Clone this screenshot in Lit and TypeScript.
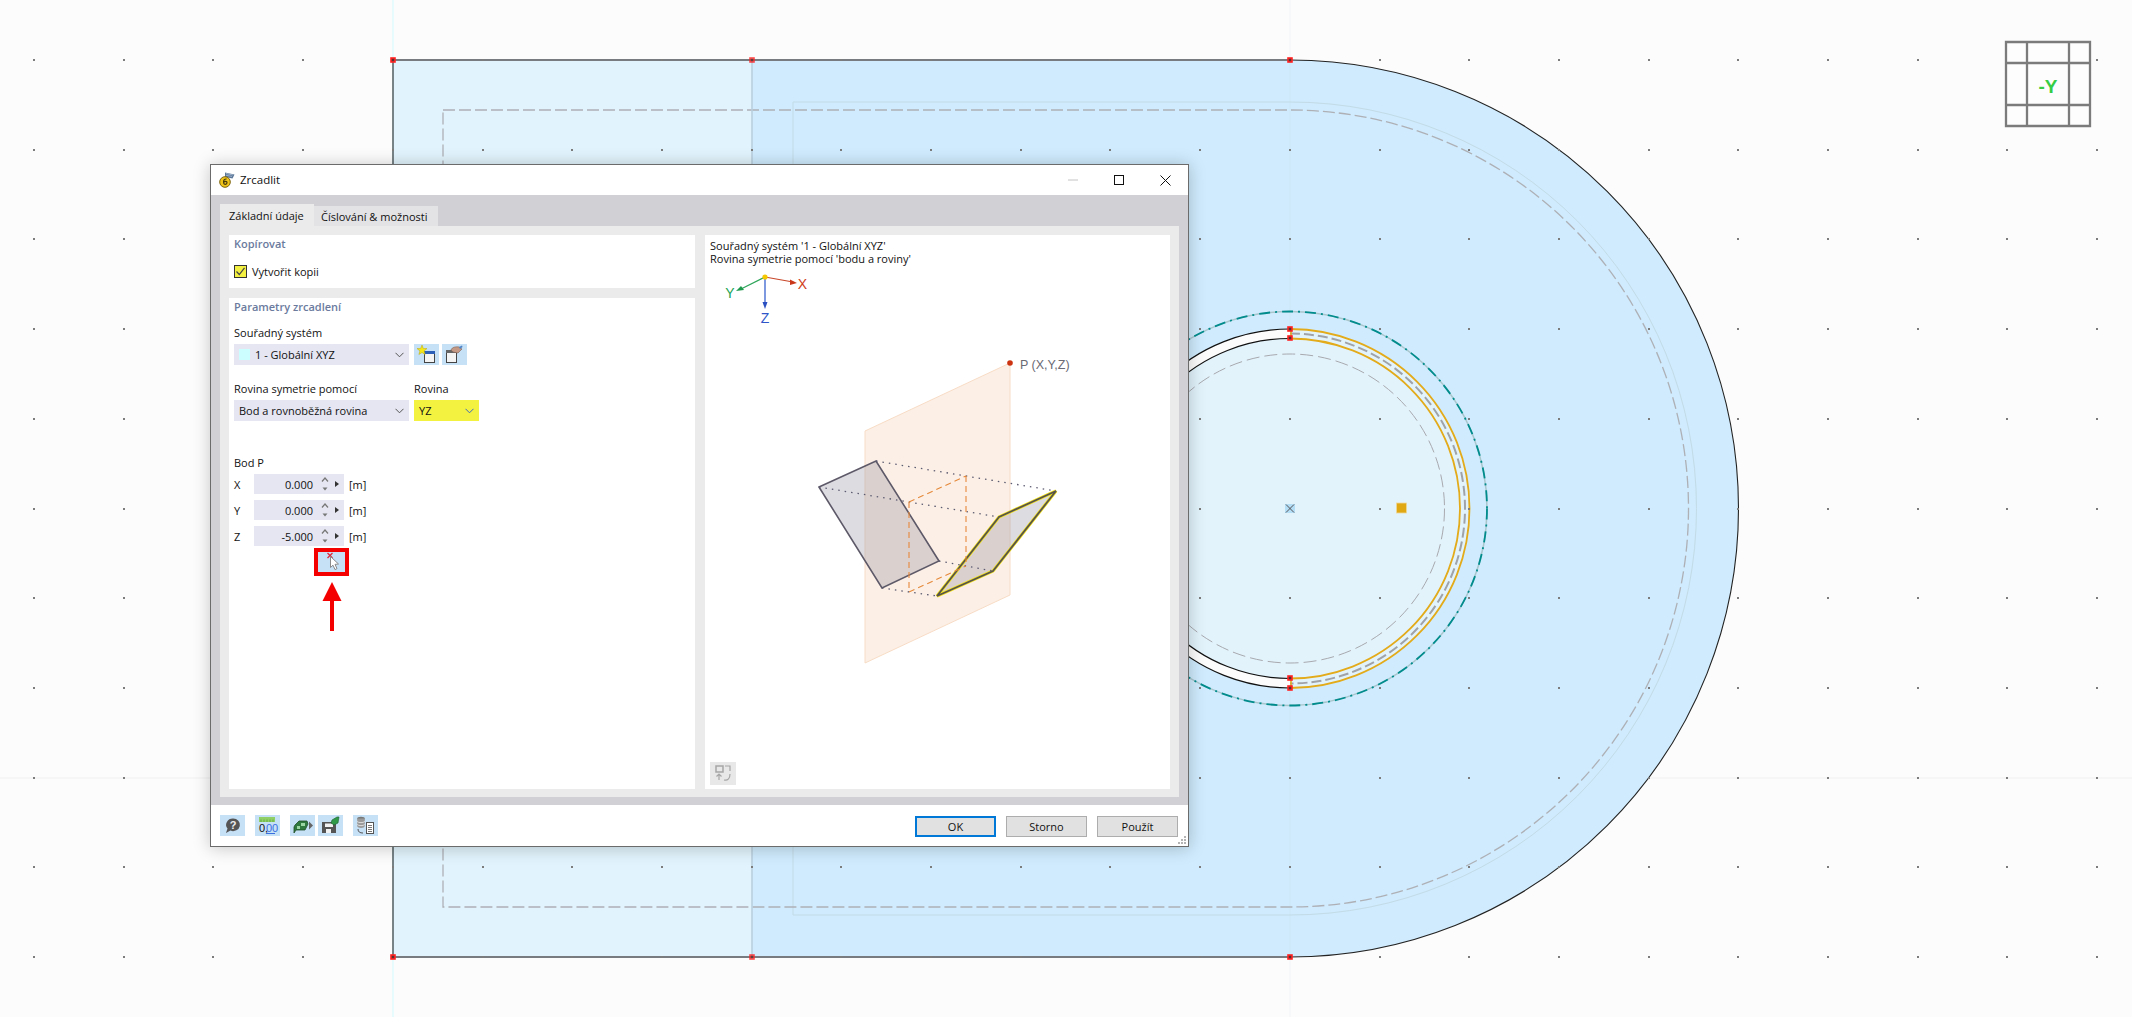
import { LitElement, html, css, svg } from "lit";
import { customElement } from "lit/decorators.js";

const CX = 1290;
const CY = 508.5;
const STEP = 89.7;

function dots() {
  const out = [];
  for (let m = 0; m <= 10; m++) {
    for (let n = 0; n <= 23; n++) {
      const x = Math.round(34 + n * STEP);
      const y = Math.round(60 + m * STEP);
      out.push(svg`<rect x=${x - 1} y=${y - 1} width="2" height="2" fill="#7c7c7c"></rect>`);
    }
  }
  return out;
}

function node(x: number, y: number, o = 1) {
  return svg`<rect x=${x - 2} y=${y - 2} width="4" height="4" fill="#553333" stroke="#ff2222" stroke-width="1.6" opacity=${o}></rect>`;
}

const chevron = (c = "#555") => html`<svg class="chev" width="9" height="6" viewBox="0 0 9 6"><path d="M.5 .8 4.5 4.8 8.5 .8" fill="none" stroke=${c} stroke-width="1"></path></svg>`;

const icons = {
  app: html`<svg width="16" height="16" viewBox="0 0 16 16"><path d="M6 .5 15.5 2.5 13.5 6.5 6 5Z" fill="#5b7797"></path><path d="M7 1.5 14 3M7 3.2 13 4.5" stroke="#a9bdd4" stroke-width=".8"></path><circle cx="6" cy="10" r="5.3" fill="#f0c419" stroke="#7d6410" stroke-width="1"></circle><path d="M7.6 7C5.4 6.8 4.2 8.4 4.6 10.8 5 13 8 12.8 8 10.6 8 9 5.8 9 5 10.2" fill="none" stroke="#4a3d0c" stroke-width="1.2"></path></svg>`,
  add: html`<svg width="25" height="21" viewBox="0 0 25 21"><rect x="10.5" y="7.5" width="10" height="11" fill="#f4f4f4" stroke="#444"></rect><rect x="10" y="7" width="11" height="3" fill="#2c5fb8"></rect><path d="M8 1 9.3 4.4 13 4.6 10.1 6.9 11.1 10.5 8 8.5 4.9 10.5 5.9 6.9 3 4.6 6.7 4.4Z" fill="#f5e616" stroke="#b9a60a" stroke-width=".5"></path></svg>`,
  edit: html`<svg width="25" height="21" viewBox="0 0 25 21"><rect x="4.5" y="7.5" width="10" height="11" fill="#f4f4f4" stroke="#444"></rect><rect x="4" y="6" width="11" height="3" fill="#666"></rect><path d="M9 6C10 3 14 2.5 17 3L20 5 16 9 11 8Z" fill="#c49a86" stroke="#7e5f52" stroke-width=".6"></path><path d="M17 3 20 1.5 20.5 3 18 5Z" fill="#4e82c4"></path></svg>`,
  pick: html`<svg width="27" height="20" viewBox="0 0 27 20"><path d="M9.5 1 14.5 6M14.5 1 9.5 6" stroke="#dd2a3a" stroke-width="1.3"></path><path d="M12.5 4.5 12.5 15.5 15 13.2 17 17.6 19 16.6 17 12.4 20.5 12Z" fill="#fff" stroke="#8a8a8a" stroke-width="1"></path></svg>`,
  help: html`<svg width="25" height="21" viewBox="0 0 25 21"><path d="M13 3.5A6.8 6.3 0 1 1 10.5 15.6L6 18 7.5 13.6A6.8 6.3 0 0 1 13 3.5Z" fill="#555"></path><text x="13" y="13.8" text-anchor="middle" class="iq">?</text></svg>`,
  units: html`<svg width="25" height="21" viewBox="0 0 25 21"><rect x="4" y="2" width="16" height="5" fill="#8fcf66"></rect><path d="M6 4.5V7M9 4.5V7M12 4.5V7M15 4.5V7M18 4.5V7" stroke="#4f9c34" stroke-width=".7"></path><text x="4" y="17" class="in">0,</text><text x="11" y="17" class="in blue">00</text><path d="M11 18.5H20" stroke="#3a6fe0" stroke-width="1"></path></svg>`,
  model: html`<svg width="25" height="21" viewBox="0 0 25 21"><path d="M5 10 9 6H17L18 9 15 15H6L4 18V12Z" fill="#2f7a3e" stroke="#1f4f2a" stroke-width=".8"></path><path d="M7 11H10V14H7ZM11 8H15V11H11Z" fill="#9ad5a4"></path><path d="M19 6.5 23 10.5 19 14.5Z" fill="#666"></path></svg>`,
  save: html`<svg width="25" height="21" viewBox="0 0 25 21"><path d="M4 7H18V18H4Z" fill="#555"></path><rect x="7" y="8.5" width="8" height="3.5" fill="#f2f2f2"></rect><rect x="8" y="14" width="5" height="4" fill="#f2f2f2"></rect><path d="M14 5 19 2 21 2 20 8 16 10 13 8Z" fill="#2f9a48" stroke="#1f5f30" stroke-width=".6"></path></svg>`,
  copy: html`<svg width="25" height="21" viewBox="0 0 25 21"><ellipse cx="8" cy="3.5" rx="3.8" ry="1.8" fill="#777"></ellipse><path d="M4.2 3.5V11C4.2 13.5 11.8 13.5 11.8 11V3.5" fill="#9a9a9a"></path><path d="M4.2 6.5C5.5 8 10.5 8 11.8 6.5M4.2 9.5C5.5 11 10.5 11 11.8 9.5" fill="none" stroke="#eee" stroke-width=".8"></path><path d="M5 14C5 17 7 18 10 18" fill="none" stroke="#555"></path><rect x="13.5" y="7.5" width="7" height="11" fill="#fff" stroke="#555"></rect><path d="M15 10.5H19M15 12.5H19M15 14.5H19M15 16.5H19" stroke="#555" stroke-width=".8"></path></svg>`,
  view: html`<svg width="26" height="23" viewBox="0 0 26 23"><rect x="6" y="4" width="7" height="6" fill="none" stroke="#a6a6a6" stroke-width="1.5"></rect><path d="M15 4H20V9M9 12V18M6.5 14.5 9 12 11.500 14.5M14 18C18 19 20 16 20 12" fill="none" stroke="#a6a6a6" stroke-width="1.2"></path></svg>`,
};

@customElement("app-root")
export class AppRoot extends LitElement {
  static styles = css`
    :host {
      display: block;
      position: relative;
      width: 2132px;
      height: 1017px;
      overflow: hidden;
      background: #fcfcfc;
      font-family: "Open Sans", "Noto Sans", sans-serif;
      font-size: 11px;
      color: #111;
    }
    .canvas { position: absolute; inset: 0; display: block; }
    .cube-label { font: bold 19px "Liberation Sans", sans-serif; fill: #35cc46; }
    .dialog {
      position: absolute;
      left: 210px;
      top: 164px;
      width: 979px;
      height: 683px;
      box-sizing: border-box;
      border: 1px solid #6b6b6b;
      background: #fff;
      display: flex;
      flex-direction: column;
      box-shadow: 0 1px 16px rgba(0, 0, 0, 0.22);
    }
    .title { flex: none; height: 30px; display: flex; align-items: center; }
    .app-icon { display: flex; margin-left: 8px; }
    .title-text { margin: 0 0 2px 5px; font-size: 11.5px; flex: 1; }
    .ctl { width: 46px; height: 30px; display: flex; align-items: center; justify-content: center; }
    .body {
      flex: 1;
      min-height: 0;
      background: #d0d0d5;
      padding: 9px 9px 8px;
      display: flex;
      flex-direction: column;
    }
    .tabs { flex: none; height: 22px; display: flex; align-items: flex-start; }
    .tab { box-sizing: border-box; display: flex; align-items: center; }
    .tab.on { width: 94px; height: 22px; padding-left: 9px; background: #ebebeb; }
    .tab.off { width: 124px; height: 21px; margin-top: 2px; padding-left: 7px; background: #e3e3e6; }
    .panel {
      flex: 1;
      min-height: 0;
      background: #ebebeb;
      padding: 9px 9px 8px;
      display: grid;
      grid-template-columns: 466px 465px;
      gap: 10px;
    }
    .col { display: flex; flex-direction: column; gap: 10px; min-height: 0; }
    .card { background: #fff; padding-left: 5px; box-sizing: border-box; }
    .card.copy { height: 53px; flex: none; }
    .card.params { flex: 1; }
    .head { height: 18px; line-height: 18px; font-weight: 600; color: #6b7b9e; }
    .check-row { display: flex; align-items: center; gap: 5px; margin-top: 12px; height: 13px; }
    .check { width: 13px; height: 13px; box-sizing: border-box; border: 1px solid #333; background: #f4f041; display: flex; }
    .label { height: 16px; line-height: 16px; margin-bottom: 3px; }
    .first { margin-top: 9px; }
    .pair { display: grid; grid-template-columns: 175px 65px; gap: 0 5px; margin-top: 16px; }
    .combo-row { display: flex; gap: 5px; }
    .combo {
      height: 21px;
      box-sizing: border-box;
      background: #e5e6f1;
      display: flex;
      align-items: center;
      padding: 0 5px;
    }
    .combo.main { width: 175px; }
    .combo.yellow { background: #f4f241; }
    .combo .txt { flex: 1; }
    .swatch { width: 11px; height: 11px; background: #ccfdff; margin-right: 5px; }
    .chev { flex: none; }
    .icons { display: flex; gap: 3px; }
    .ib { width: 25px; height: 21px; background: #c6e0f6; display: flex; flex: none; }
    .bod { margin-top: 34px; }
    .rows { display: flex; flex-direction: column; gap: 6px; }
    .row { display: flex; align-items: center; height: 20px; }
    .row .k { width: 20px; }
    .num { width: 90px; height: 20px; background: #e5e6f1; display: flex; align-items: center; }
    .num .v { width: 59px; text-align: right; }
    .num svg { margin-left: 4px; }
    .unit { margin-left: 5px; }
    .pick-wrap { margin: 2px 0 0 80px; width: 35px; height: 28px; box-sizing: border-box; border: 4px solid #f40000; background: #c6e0f6; display: flex; }
    .arrow { display: block; margin: 6px 0 0 88px; }
    .preview { background: #fff; position: relative; display: flex; flex-direction: column; padding: 4px 5px; box-sizing: border-box; min-height: 0; }
    .preview .ln { height: 13px; line-height: 13px; }
    .fig { position: absolute; left: 0; top: 0; }
    .fig-text { font: 12.5px "Liberation Sans", sans-serif; fill: #6a6a74; }
    .ax { font: 14px "Liberation Sans", sans-serif; }
    .view-btn { position: absolute; left: 5px; bottom: 4px; width: 26px; height: 23px; background: #e8e8e8; display: flex; }
    .footer { flex: none; height: 41px; position: relative; display: flex; padding: 10px 10px 0 9px; box-sizing: border-box; }
    .fgroup { display: flex; gap: 3px; margin-right: 10px; }
    .spacer { flex: 1; }
    .btns { display: flex; gap: 10px; margin-top: 1px; }
    .btn {
      width: 81px;
      height: 21px;
      box-sizing: border-box;
      border: 1px solid #adadad;
      background: #e1e1e1;
      display: flex;
      align-items: center;
      justify-content: center;
    }
    .btn.def { border: 2px solid #0078d7; }
    .grip { position: absolute; right: 2px; bottom: 1px; }
    .iq { font: bold 11px "Liberation Sans", sans-serif; fill: #eee; }
    .in { font: 11px "Liberation Sans", sans-serif; fill: #111; }
    .in.blue { fill: #3a6fe0; }
  `;

  private canvas() {
    // Half-circle segments from the current point at (CX, CY -/+ rad).
    const cw = (rad: number) => `A${rad} ${rad} 0 0 1 ${CX} ${CY + rad}`;
    const ccw = (rad: number) => `A${rad} ${rad} 0 0 0 ${CX} ${CY + rad}`;
    const top = (rad: number) => `M${CX} ${CY - rad}`;
    const loop = (x: number, rad: number) => `M${x} ${CY - rad}H${CX}${cw(rad)}H${x}Z`;
    return html`<svg class="canvas" width="2132" height="1017" viewBox="0 0 2132 1017">
      <path d="M0 778H2132" stroke="#f0f0f0"></path>
      <path d="M393 0V1017" stroke="#d2fbff"></path>
      <path d="${loop(752, 448.5)}" fill="#cfebfd"></path>
      <rect x="393" y="60" width="359" height="897" fill="#e1f3fc"></rect>
      <path d="M1290 0V1017" stroke="#c9d9e2" stroke-opacity=".22"></path>
      <path d="${loop(793, 406.5)}" fill="none" stroke="#c3dbe7" stroke-width="1"></path>
      <path d="${loop(443, 398.5)}" fill="none" stroke="#aeb0b6" stroke-width="1.3" stroke-dasharray="12 4"></path>
      <path d="M752 60V957" stroke="#b7cedc" stroke-width="1.5"></path>
      <path d="${top(448.5)}${cw(448.5)}" fill="none" stroke="#222" stroke-width="1.1"></path>
      <path d="M393 60V957" stroke="#3c4448" stroke-width="1.3"></path>
      <path d="M393 60H1290M393 957H1290" stroke="#787c80" stroke-width="2"></path>

      <circle cx=${CX} cy=${CY} r="197" fill="none" stroke="#a9c6cd" stroke-width="1.5"></circle>
      <circle cx=${CX} cy=${CY} r="197" fill="none" stroke="#008c8c" stroke-width="1.8" stroke-dasharray="11 5 2 5"></circle>
      <circle cx=${CX} cy=${CY} r="179.5" fill="#e2f3fc"></circle>
      <path d="${top(179.5)}${ccw(179.5)}V${CY + 170}A170 170 0 0 1 ${CX} ${CY - 170}Z" fill="#fcfcfc"></path>
      <path d="${top(179.5)}${ccw(179.5)}${top(170)}${ccw(170)}" fill="none" stroke="#111" stroke-width="1.2"></path>
      <circle cx=${CX} cy=${CY} r="154.5" fill="none" stroke="#a8a9ae" stroke-width="1" stroke-dasharray="13 5"></circle>
      <path d="${top(175)}${cw(175)}" fill="none" stroke="#a0a3a8" stroke-width="2" stroke-dasharray="10 4"></path>
      <path d="${top(179.5)}${cw(179.5)}${top(170)}${cw(170)}" fill="none" stroke="#e3ab1a" stroke-width="1.8"></path>
      <path d="M${CX + 1} 330V338M${CX + 1} 679V688" stroke="#e3ab1a" stroke-width="1.5"></path>
      ${dots()}
      ${node(393, 60)}${node(752, 60, 0.8)}${node(1290, 60)}
      ${node(393, 957)}${node(752, 957, 0.8)}${node(1290, 957)}
      ${node(1290, 329)}${node(1290, 338)}${node(1290, 678)}${node(1290, 688)}
      <rect x="1285" y="504" width="10" height="9" fill="#b4def6"></rect>
      <path d="M1286 504.5 1294 512.5M1294 504.5 1286 512.5" stroke="#555" stroke-width="1"></path>
      <rect x="1396.5" y="503" width="10" height="10" fill="#e0a914" stroke="#efd79a" stroke-width=".8"></rect>

      <path d="M2006 42H2090V126H2006Z" fill="#fdfdfd"></path>
      <path d="M2006 42H2090V126H2006ZM2027 42V126M2069 42V126M2006 63H2090M2006 105H2090" fill="none" stroke="#7b7b7b" stroke-width="2.3"></path>
      <text x="2048" y="93" text-anchor="middle" class="cube-label">-Y</text>
    </svg>`;
  }

  private figure() {
    // Coordinates relative to the preview card, whose origin is (705, 235).
    const t = (x: number, y: number) => `${x - 705} ${y - 235}`;
    const poly = (pts: number[][]) => "M" + pts.map((p) => t(p[0], p[1])).join("L") + "Z";
    const line = (a: number[], b: number[]) => `M${t(a[0], a[1])}L${t(b[0], b[1])}`;
    const L = [[819, 487], [876, 461], [939, 561], [882, 588]];
    const R = [[1056, 491], [999, 517], [937, 596], [993, 571]];
    return html`<svg class="fig" width="465" height="554" viewBox="0 0 465 554">
      <path d="${poly([[865, 431], [1010, 363], [1010, 595], [865, 663]])}" fill="#fcf0e6" stroke="#f8dcc6"></path>
      <path d="${poly(L)}" fill="#8a8a9c" fill-opacity=".3" stroke="#5e5968" stroke-width="1.6"></path>
      <path d="${poly(R)}" fill="#8a8a9c" fill-opacity=".3" stroke="#f2e21a" stroke-width="3.2"></path>
      <path d="${poly(R)}" fill="none" stroke="#57534a" stroke-width="1.8"></path>
      <path d="${line([876, 461], [1056, 491])}${line([819, 487], [999, 517])}${line([939, 561], [993, 571])}${line([882, 588], [937, 596])}" fill="none" stroke="#5c5a70" stroke-width="1.3" stroke-dasharray="1.5 5"></path>
      <path d="${line([909, 502], [966, 476])}${line([909, 502], [909, 592])}${line([966, 476], [966, 566])}${line([909, 592], [966, 566])}" fill="none" stroke="#e5883a" stroke-width="1.1" stroke-dasharray="6 4"></path>
      <circle cx=${1010 - 705} cy=${363 - 235} r="2.8" fill="#cc3311"></circle>
      <text x=${1020 - 705} y=${368.5 - 235} class="fig-text">P (X,Y,Z)</text>

      <path d="${line([765, 277], [793, 282])}" stroke="#c9472a" stroke-width="1.2"></path>
      <path d="M${t(797, 283)}L${t(790, 285)}L${t(790, 279.5)}Z" fill="#c9381a"></path>
      <path d="${line([765, 277], [741, 289])}" stroke="#2fa55a" stroke-width="1.2"></path>
      <path d="M${t(736, 291)}L${t(741, 286)}L${t(744, 290)}Z" fill="#1f9a4c"></path>
      <path d="${line([765, 277], [765, 303])}" stroke="#5d7fd8" stroke-width="1.6"></path>
      <path d="M${t(765, 309)}L${t(762.5, 302)}L${t(767.5, 302)}Z" fill="#2a4fc0"></path>
      <circle cx=${765 - 705} cy=${277 - 235} r="2.6" fill="#f5c800"></circle>
      <text x=${802.5 - 705} y=${289 - 235} text-anchor="middle" class="ax" fill="#d04020">X</text>
      <text x=${730 - 705} y=${298 - 235} text-anchor="middle" class="ax" fill="#22a455">Y</text>
      <text x=${765 - 705} y=${323 - 235} text-anchor="middle" class="ax" fill="#2f55c8">Z</text>
    </svg>`;
  }

  private numRow(k: string, v: string) {
    return html`<div class="row">
      <div class="k">${k}</div>
      <div class="num">
        <div class="v">${v}</div>
        <svg width="24" height="20" viewBox="0 0 24 20">
          <path d="M5 7.5 8 4 11 7.5" fill="none" stroke="#777" stroke-width="1.2"></path>
          <path d="M5.5 13.5H10.5L8 16.5Z" fill="#777"></path>
          <path d="M18 7 22 10 18 13Z" fill="#333"></path>
        </svg>
      </div>
      <div class="unit">[m]</div>
    </div>`;
  }

  render() {
    return html`
      ${this.canvas()}
      <section class="dialog">
        <div class="title">
          <div class="app-icon">${icons.app}</div>
          <div class="title-text">Zrcadlit</div>
          <div class="ctl"><svg width="10" height="2" viewBox="0 0 10 2"><path d="M0 1H10" stroke="#c4c4c4"></path></svg></div>
          <div class="ctl"><svg width="10" height="10" viewBox="0 0 10 10"><rect x=".5" y=".5" width="9" height="9" fill="none" stroke="#111"></rect></svg></div>
          <div class="ctl"><svg width="11" height="11" viewBox="0 0 11 11"><path d="M.5 .5 10.5 10.5M10.5 .5 .5 10.5" stroke="#111" stroke-width="1"></path></svg></div>
        </div>
        <div class="body">
          <div class="tabs">
            <div class="tab on">Základní údaje</div>
            <div class="tab off">Číslování &amp; možnosti</div>
          </div>
          <div class="panel">
            <div class="col">
              <div class="card copy">
                <div class="head">Kopírovat</div>
                <div class="check-row">
                  <div class="check"><svg width="11" height="11" viewBox="0 0 11 11"><path d="M1.5 5.5 4.3 8.5 9.5 1.8" fill="none" stroke="#444" stroke-width="1.2"></path></svg></div>
                  <div>Vytvořit kopii</div>
                </div>
              </div>
              <div class="card params">
                <div class="head">Parametry zrcadlení</div>
                <div class="label first">Souřadný systém</div>
                <div class="combo-row">
                  <div class="combo main"><div class="swatch"></div><div class="txt">1 - Globální XYZ</div>${chevron()}</div>
                  <div class="icons"><div class="ib">${icons.add}</div><div class="ib">${icons.edit}</div></div>
                </div>
                <div class="pair">
                  <div class="label">Rovina symetrie pomocí</div>
                  <div class="label">Rovina</div>
                  <div class="combo main"><div class="txt">Bod a rovnoběžná rovina</div>${chevron()}</div>
                  <div class="combo yellow"><div class="txt">YZ</div>${chevron("#3f6ab8")}</div>
                </div>
                <div class="label bod">Bod P</div>
                <div class="rows">
                  ${this.numRow("X", "0.000")}
                  ${this.numRow("Y", "0.000")}
                  ${this.numRow("Z", "-5.000")}
                </div>
                <div class="pick-wrap">${icons.pick}</div>
                <svg class="arrow" width="20" height="50" viewBox="0 0 20 50"><path d="M10 0 19.5 19H12V49H8V19H.5Z" fill="#f40000"></path></svg>
              </div>
            </div>
            <div class="preview">
              ${this.figure()}
              <div class="ln">Souřadný systém '1 - Globální XYZ'</div>
              <div class="ln">Rovina symetrie pomocí 'bodu a roviny'</div>
              <div class="view-btn">${icons.view}</div>
            </div>
          </div>
        </div>
        <div class="footer">
          <div class="fgroup"><div class="ib">${icons.help}</div></div>
          <div class="fgroup"><div class="ib">${icons.units}</div></div>
          <div class="fgroup"><div class="ib">${icons.model}</div><div class="ib">${icons.save}</div></div>
          <div class="fgroup"><div class="ib">${icons.copy}</div></div>
          <div class="spacer"></div>
          <div class="btns">
            <div class="btn def">OK</div>
            <div class="btn">Storno</div>
            <div class="btn">Použít</div>
          </div>
          <svg class="grip" width="9" height="9" viewBox="0 0 9 9"><path d="M7 0h2v2H7zM4 3h2v2H4zM7 3h2v2H7zM1 6h2v2H1zM4 6h2v2H4zM7 6h2v2H7z" fill="#b4b4b4"></path></svg>
        </div>
      </section>
    `;
  }
}
